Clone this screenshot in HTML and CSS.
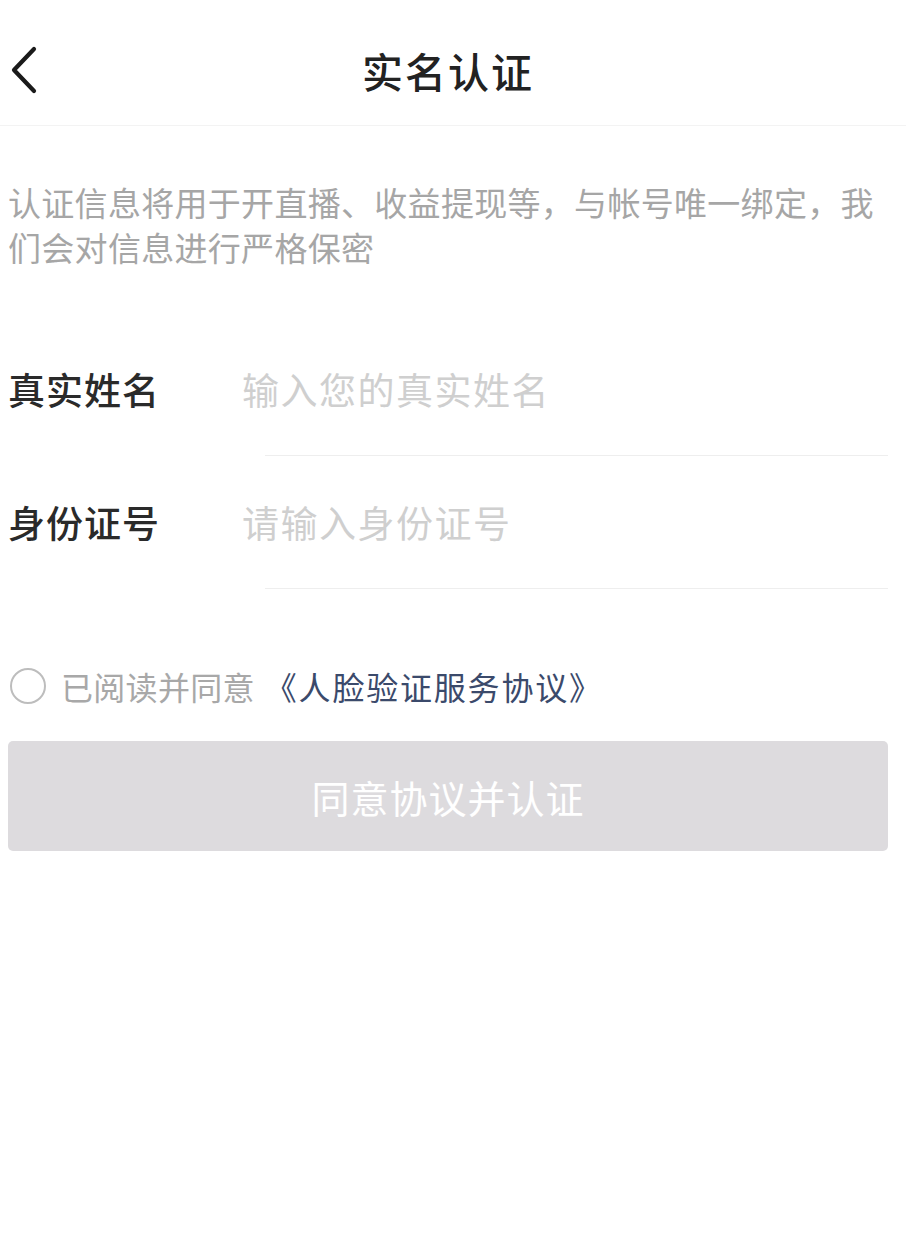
FILE: index.html
```html
<!DOCTYPE html>
<html lang="zh-CN">
<head>
<meta charset="utf-8">
<title>实名认证</title>
<link rel="stylesheet" href="styles.css">
</head>
<body>
<div class="page">
  <header class="nav">
    <span class="back">
      <svg width="30" height="48" viewBox="0 0 30 48"><path d="M25 3 L5 24 L25 45" fill="none" stroke="#1a1a1a" stroke-width="4.2" stroke-linecap="round" stroke-linejoin="round"/></svg>
    </span>
    <h1 class="title">实名认证</h1>
  </header>

  <p class="desc">认证信息将用于开直播、收益提现等，与帐号唯一绑定，我们会对信息进行严格保密</p>

  <div class="form">
    <div class="row">
      <div class="field">
        <span class="label">真实姓名</span>
        <span class="placeholder">输入您的真实姓名</span>
      </div>
      <div class="line"></div>
    </div>
    <div class="row">
      <div class="field">
        <span class="label">身份证号</span>
        <span class="placeholder">请输入身份证号</span>
      </div>
      <div class="line"></div>
    </div>
  </div>

  <div class="agree">
    <span class="radio"></span>
    <span class="agree-text">已阅读并同意</span>
    <span class="link">《人脸验证服务协议》</span>
  </div>

  <div class="btn">同意协议并认证</div>
</div>
</body>
</html>
```

FILE: styles.css
```css
html, body {
  margin: 0;
  padding: 0;
  background: #ffffff;
}

body {
  font-family: "Noto Sans CJK SC", "Noto Sans", sans-serif;
  color: #222;
}

.page {
  width: 906px;
}

.nav {
  height: 125px;
  display: flex;
  align-items: center;
  justify-content: center;
  position: relative;
  border-bottom: 1px solid #f3f3f3;
}

.back {
  position: absolute;
  left: 9px;
  top: 46px;
  width: 30px;
  height: 48px;
  display: block;
}

.back svg {
  display: block;
}

.title {
  margin: 0 10px 0 0;
  padding-top: 14px;
  font-size: 41px;
  font-weight: 500;
  color: #222;
  letter-spacing: 2px;
  line-height: 48px;
}

.desc {
  margin: 54px 20px 0 8px;
  font-size: 33px;
  line-height: 45px;
  letter-spacing: 0.3px;
  color: #a6a6a6;
}

.form {
  margin-top: 97px;
}

.row {
  display: flex;
  flex-direction: column;
}

.field {
  display: flex;
  align-items: center;
  height: 44px;
  margin: 0 0 44px 8px;
}

.row + .row {
  margin-top: 44px;
}

.label {
  width: 234px;
  font-size: 37px;
  font-weight: 500;
  color: #2a2a2a;
  line-height: 44px;
  letter-spacing: 1px;
}

.placeholder {
  font-size: 37px;
  color: #cfcfcf;
  line-height: 44px;
  letter-spacing: 1.5px;
}

.line {
  height: 1px;
  background: #eeeeee;
  margin: 0 18px 0 265px;
}

.agree {
  margin: 75px 0 0 10px;
  height: 44px;
  display: flex;
  align-items: center;
}

.radio {
  width: 32px;
  height: 32px;
  border: 2.5px solid #bdbdbd;
  border-radius: 50%;
  margin-right: 15px;
}

.agree-text {
  font-size: 32px;
  color: #a8a8a8;
  letter-spacing: 0.3px;
}

.link {
  margin-left: 10px;
  font-size: 32px;
  color: #3b4a6b;
  letter-spacing: 1.8px;
}

.btn {
  margin: 33px 18px 0 8px;
  height: 110px;
  border-radius: 5px;
  background: #dddbde;
  color: #ffffff;
  font-size: 38px;
  letter-spacing: 1px;
  display: flex;
  align-items: center;
  justify-content: center;
}
```
